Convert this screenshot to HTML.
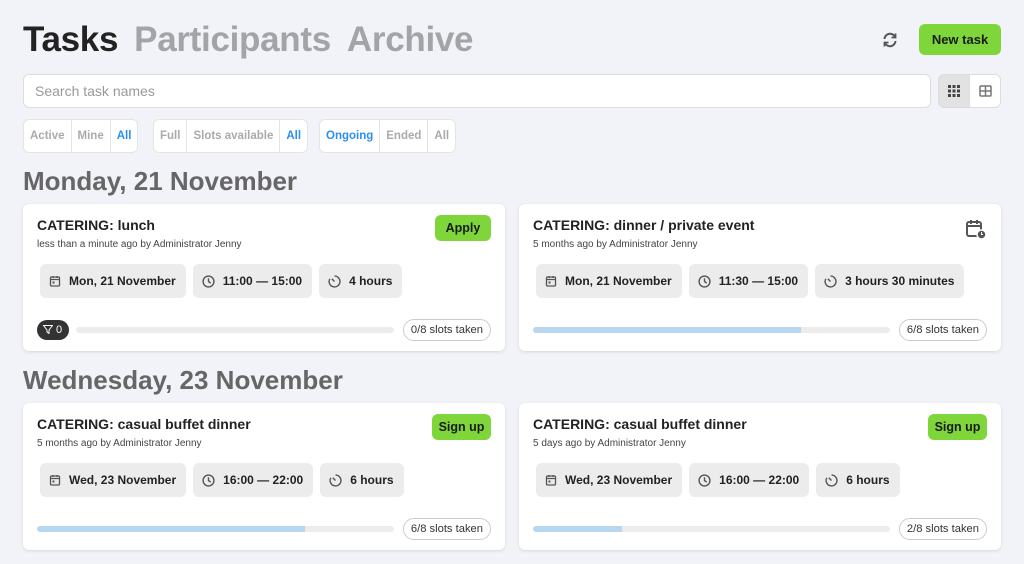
<!DOCTYPE html><html><head><style>
*{box-sizing:border-box;margin:0;padding:0}
body{width:1024px;height:564px;overflow:hidden;background:#f2f3f8;font-family:"Liberation Sans",sans-serif;position:relative;color:#222}
.abs{position:absolute}
.tabs{left:23px;top:20px;font-size:35px;font-weight:bold;letter-spacing:-0.3px;white-space:nowrap}
.tabs span{margin-right:16px;color:#a3a4a8}
.tabs span:first-child{color:#222}
.btn{background:#7ed63a;border-radius:6px;font-weight:bold;font-size:13px;color:#1a1a1a;text-align:center}
.search{left:23px;top:74px;width:908px;height:34px;background:#fff;border:1px solid #ddd;border-radius:6px;font-size:14px;color:#999;padding:8px 11px}
.vt{top:74px;height:34px;width:32px;border:1px solid #ddd;background:#fff}
.fg{top:119px;height:34px;background:#fff;border:1px solid #e4e4e4;border-radius:6px;display:flex;font-size:11.5px;font-weight:bold;color:#aaa}
.fg div{padding:0 6px;line-height:32px;border-right:1px solid #e4e4e4}
.fg div:last-child{border:none}
.fg .on{color:#2a8ff0}
.h{left:23px;font-size:26px;font-weight:bold;color:#666}
.card{width:482px;height:147px;background:#fff;border-radius:6px;box-shadow:0 1px 3px rgba(0,0,0,.12)}
.card .t{position:absolute;left:14px;top:13px;font-size:14px;font-weight:bold}
.card .s{position:absolute;left:14px;top:35px;font-size:10px;color:#444}
.chips{position:absolute;left:17px;top:60px;display:flex;gap:7px}
.chip{height:34px;background:#ececec;border-radius:6px;padding:0 10px 0 9px;display:flex;align-items:center;gap:8px;font-size:12px;font-weight:bold}
.bar{position:absolute;top:123px;height:6px;background:#ececec;border-radius:3px;overflow:hidden}
.bar i{display:block;height:100%;background:#b7d7f0}
.pill{position:absolute;right:14px;top:115px;height:22px;border:1px solid #ccc;border-radius:11px;font-size:11.2px;padding:0 7px;line-height:20px;color:#333}
.card .btn{position:absolute;right:14px;top:11px;height:26px;line-height:26px;width:56px;font-size:12.5px}
</style></head><body>
<div class="abs tabs"><span>Tasks</span><span>Participants</span><span>Archive</span></div>
<svg class="abs" style="left:882px;top:32px" width="16" height="16" viewBox="0 0 16 16" fill="none" stroke="#555" stroke-width="2"><path d="M2.5 7A5.5 5.5 0 0 1 13 5M13.5 9A5.5 5.5 0 0 1 3 11"/><path d="M13.5 1.5v4h-4M2.5 14.5v-4h4" stroke-width="1.8"/></svg>
<div class="abs btn" style="left:919px;top:24px;width:82px;height:31px;line-height:31px">New task</div>
<div class="abs search">Search task names</div>
<div class="abs vt" style="left:938px;background:#e2e2e2;border-radius:6px 0 0 6px"><svg style="margin:10px 0 0 9px" width="12" height="12"><g fill="#444"><rect x="0" y="0" width="3" height="3"/><rect x="4.5" y="0" width="3" height="3"/><rect x="9" y="0" width="3" height="3"/><rect x="0" y="4.5" width="3" height="3"/><rect x="4.5" y="4.5" width="3" height="3"/><rect x="9" y="4.5" width="3" height="3"/><rect x="0" y="9" width="3" height="3"/><rect x="4.5" y="9" width="3" height="3"/><rect x="9" y="9" width="3" height="3"/></g></svg></div>
<div class="abs vt" style="left:969px;border-radius:0 6px 6px 0"><svg style="margin:10px 0 0 9px" width="13" height="12"><rect x="1" y="1" width="11" height="10" rx="1" fill="none" stroke="#777" stroke-width="1.5"/><path d="M1 6h11M6.5 1v10" stroke="#777" stroke-width="1.5"/></svg></div>
<div class="abs fg" style="left:23px"><div>Active</div><div>Mine</div><div class="on">All</div></div>
<div class="abs fg" style="left:153px"><div>Full</div><div>Slots available</div><div class="on">All</div></div>
<div class="abs fg" style="left:319px"><div class="on">Ongoing</div><div>Ended</div><div>All</div></div>
<div class="abs h" style="top:166px">Monday, 21 November</div>
<div class="abs h" style="top:365px">Wednesday, 23 November</div>

<svg width="0" height="0" style="position:absolute"><defs>
<symbol id="cal" viewBox="0 0 12 12"><rect x="1.5" y="2" width="9" height="9" rx="1" fill="none" stroke="#555" stroke-width="1.3"/><path d="M1.5 4.5h9M4 1v2M8 1v2" stroke="#555" stroke-width="1.3"/><rect x="3.5" y="6.5" width="2" height="2" fill="#555"/></symbol>
<symbol id="clk" viewBox="0 0 12 12"><circle cx="6" cy="6" r="5" fill="none" stroke="#555" stroke-width="1.3"/><path d="M6 3v3l2 1.5" fill="none" stroke="#555" stroke-width="1.3"/></symbol>
<symbol id="tmr" viewBox="0 0 12 12"><path d="M6 1a5 5 0 1 1-4.3 2.5" fill="none" stroke="#555" stroke-width="1.3"/><path d="M6 6L3.5 3.5" stroke="#555" stroke-width="1.3"/></symbol>
</defs></svg>

<div class="abs card" style="left:23px;top:204px">
<div class="t">CATERING: lunch</div><div class="s">less than a minute ago by Administrator Jenny</div>
<div class="btn">Apply</div>
<div class="chips"><div class="chip"><svg width="12" height="12"><use href="#cal"/></svg>Mon, 21 November</div><div class="chip"><svg width="13" height="13"><use href="#clk"/></svg>11:00 — 15:00</div><div class="chip"><svg width="13" height="13"><use href="#tmr"/></svg>4 hours</div></div>
<div style="position:absolute;left:14px;top:116px;width:32px;height:20px;background:#333;border-radius:10px;color:#fff;font-size:11px;line-height:20px;padding-left:6px"><svg width="10" height="9" style="vertical-align:-1px"><path d="M0.5 0.5h9L6 5v3.5L4 7V5z" fill="none" stroke="#fff" stroke-width="1"/></svg> 0</div>
<div class="bar" style="left:53px;width:318px"></div>
<div class="pill">0/8 slots taken</div>
</div>

<div class="abs card" style="left:519px;top:204px">
<div class="t">CATERING: dinner / private event</div><div class="s">5 months ago by Administrator Jenny</div>
<svg style="position:absolute;right:14px;top:14px" width="22" height="22" viewBox="0 0 22 22"><rect x="2" y="4" width="14" height="14" rx="2" fill="none" stroke="#555" stroke-width="2"/><path d="M2 8h14M6 2v4M12 2v4" stroke="#555" stroke-width="2"/><circle cx="16.5" cy="16.5" r="4.5" fill="#555" stroke="#fff" stroke-width="1.5"/><path d="M16.5 14v2.5h1.5" stroke="#fff" stroke-width="1" fill="none"/></svg>
<div class="chips"><div class="chip"><svg width="12" height="12"><use href="#cal"/></svg>Mon, 21 November</div><div class="chip"><svg width="13" height="13"><use href="#clk"/></svg>11:30 — 15:00</div><div class="chip"><svg width="13" height="13"><use href="#tmr"/></svg>3 hours 30 minutes</div></div>
<div class="bar" style="left:14px;width:357px"><i style="width:75%"></i></div>
<div class="pill">6/8 slots taken</div>
</div>

<div class="abs card" style="left:23px;top:403px">
<div class="t">CATERING: casual buffet dinner</div><div class="s">5 months ago by Administrator Jenny</div>
<div class="btn" style="width:59px">Sign up</div>
<div class="chips"><div class="chip"><svg width="12" height="12"><use href="#cal"/></svg>Wed, 23 November</div><div class="chip"><svg width="13" height="13"><use href="#clk"/></svg>16:00 — 22:00</div><div class="chip"><svg width="13" height="13"><use href="#tmr"/></svg>6 hours</div></div>
<div class="bar" style="left:14px;width:357px"><i style="width:75%"></i></div>
<div class="pill">6/8 slots taken</div>
</div>

<div class="abs card" style="left:519px;top:403px">
<div class="t">CATERING: casual buffet dinner</div><div class="s">5 days ago by Administrator Jenny</div>
<div class="btn" style="width:59px">Sign up</div>
<div class="chips"><div class="chip"><svg width="12" height="12"><use href="#cal"/></svg>Wed, 23 November</div><div class="chip"><svg width="13" height="13"><use href="#clk"/></svg>16:00 — 22:00</div><div class="chip"><svg width="13" height="13"><use href="#tmr"/></svg>6 hours</div></div>
<div class="bar" style="left:14px;width:357px"><i style="width:25%"></i></div>
<div class="pill">2/8 slots taken</div>
</div>
</body></html>
